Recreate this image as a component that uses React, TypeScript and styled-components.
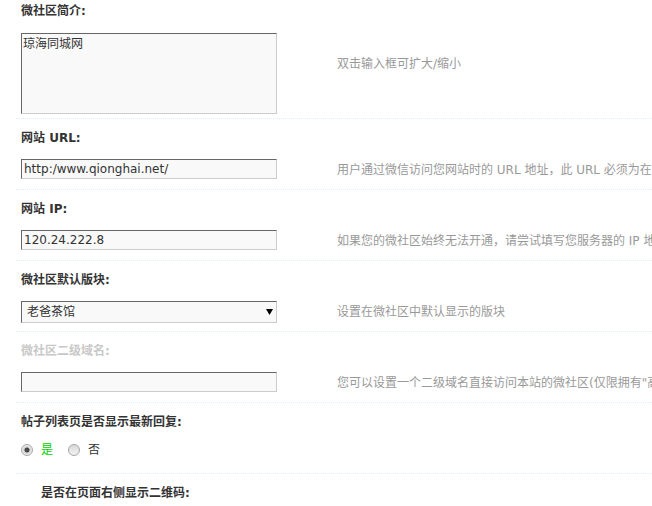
import React from "react";
import styled, { createGlobalStyle, css } from "styled-components";

const GlobalStyle = createGlobalStyle`
  html, body {
    margin: 0;
    padding: 0;
    background: #fff;
    overflow: hidden;
  }
  body {
    font-size: 12px;
    font-family: "DejaVu Sans", "Noto Sans CJK SC", sans-serif;
    color: #333;
  }
`;

const Page = styled.div`
  width: 652px;
  height: 506px;
  overflow: hidden;
`;

const Section = styled.div<{ $first?: boolean }>`
  margin-left: 16px;
  width: 700px;
  border-top: ${(p) => (p.$first ? "none" : "1px dotted #deeffb")};
`;

const LabelRow = styled.div<{ $first?: boolean; $indent?: boolean; $disabled?: boolean }>`
  font-family: "DejaVu Sans", "Noto Sans CJK SC", sans-serif;
  font-weight: 700;
  line-height: 16px;
  white-space: nowrap;
  color: ${(p) => (p.$disabled ? "#c8c8c8" : "#333")};
  padding: ${(p) => (p.$first ? "3px 0 14px" : "11px 0 5px")};
  padding-left: ${(p) => (p.$indent ? "25px" : "5px")};
`;

const FieldRow = styled.div<{ $tall?: boolean }>`
  display: flex;
  align-items: flex-start;
  box-sizing: border-box;
  ${(p) =>
    p.$tall
      ? css`
          height: 85px;
          padding-top: 0;
        `
      : css`
          height: 38px;
          padding-top: 8px;
        `}
`;

const FieldCell = styled.div`
  width: 321px;
  flex: none;
  padding-left: 5px;
  box-sizing: border-box;
`;

const Tip = styled.div<{ $top: number }>`
  color: #999;
  line-height: 16px;
  white-space: nowrap;
  padding-top: ${(p) => p.$top}px;
`;

const fieldBox = css`
  display: block;
  box-sizing: border-box;
  width: 256px;
  margin: 0;
  border: 1px solid #cccccc;
  border-top-color: #666;
  border-left-color: #666;
  background: #f9f9f9;
  color: #333;
  font-size: 12px;
  font-family: "DejaVu Sans", "Noto Sans CJK SC", sans-serif;
  outline: none;
  border-radius: 0;
`;

const TextInput = styled.input`
  ${fieldBox};
  height: 20px;
  padding: 0 2px;
`;

const TextArea = styled.textarea`
  ${fieldBox};
  height: 81px;
  padding: 2px 1px;
  line-height: 16px;
  resize: none;
`;

const SelectWrap = styled.div`
  position: relative;
  width: 256px;
  height: 22px;
`;

const Select = styled.select`
  ${fieldBox};
  height: 22px;
  padding: 0 0 0 5px;
  appearance: none;
  -webkit-appearance: none;
`;

const SelectArrow = styled.svg`
  position: absolute;
  right: 4px;
  top: 8px;
  pointer-events: none;
`;

const RadioGroup = styled.div`
  display: flex;
  align-items: center;
  height: 14px;
  padding-left: 5px;
`;

const RadioLabel = styled.label<{ $on?: boolean }>`
  display: flex;
  align-items: center;
  margin-right: 15px;
  color: ${(p) => (p.$on ? "#00d000" : "#333")};
  line-height: 14px;
`;

const Radio = styled.input`
  appearance: none;
  -webkit-appearance: none;
  width: 12px;
  height: 12px;
  margin: 0 8px 0 0;
  border-radius: 50%;
  border: 1px solid #a6a6a6;
  box-sizing: border-box;
  background: linear-gradient(#d8d8d8, #f4f4f4);
  &:checked {
    background: radial-gradient(circle, #4a4a4a 0 2.2px, #cfcfcf 2.8px, #f0f0f0 5px);
  }
`;

export default function App() {
  return (
    <>
      <GlobalStyle />
      <Page>
        <Section $first>
          <LabelRow $first>微社区简介:</LabelRow>
          <FieldRow $tall>
            <FieldCell>
              <TextArea defaultValue="琼海同城网" />
            </FieldCell>
            <Tip $top={23}>双击输入框可扩大/缩小</Tip>
          </FieldRow>
        </Section>

        <Section>
          <LabelRow>网站 URL:</LabelRow>
          <FieldRow>
            <FieldCell>
              <TextInput defaultValue="http:/www.qionghai.net/" />
            </FieldCell>
            <Tip $top={3}>用户通过微信访问您网站时的 URL 地址，此 URL 必须为在互联网上可以访问的地址</Tip>
          </FieldRow>
        </Section>

        <Section>
          <LabelRow>网站 IP:</LabelRow>
          <FieldRow>
            <FieldCell>
              <TextInput defaultValue="120.24.222.8" />
            </FieldCell>
            <Tip $top={3}>如果您的微社区始终无法开通，请尝试填写您服务器的 IP 地址</Tip>
          </FieldRow>
        </Section>

        <Section>
          <LabelRow>微社区默认版块:</LabelRow>
          <FieldRow>
            <FieldCell>
              <SelectWrap>
                <Select defaultValue="1">
                  <option value="1">老爸茶馆</option>
                </Select>
                <SelectArrow width="7" height="6" viewBox="0 0 7 6">
                  <polygon points="0,0 7,0 3.5,6" fill="#000" />
                </SelectArrow>
              </SelectWrap>
            </FieldCell>
            <Tip $top={3}>设置在微社区中默认显示的版块</Tip>
          </FieldRow>
        </Section>

        <Section>
          <LabelRow $disabled>微社区二级域名:</LabelRow>
          <FieldRow>
            <FieldCell>
              <TextInput defaultValue="" />
            </FieldCell>
            <Tip $top={3}>您可以设置一个二级域名直接访问本站的微社区(仅限拥有"高级版"权限的站点)</Tip>
          </FieldRow>
        </Section>

        <Section>
          <LabelRow>帖子列表页是否显示最新回复:</LabelRow>
          <FieldRow>
            <RadioGroup>
              <RadioLabel $on>
                <Radio type="radio" name="reply" defaultChecked />是
              </RadioLabel>
              <RadioLabel>
                <Radio type="radio" name="reply" />否
              </RadioLabel>
            </RadioGroup>
          </FieldRow>
        </Section>

        <Section>
          <LabelRow $indent>是否在页面右侧显示二维码:</LabelRow>
        </Section>
      </Page>
    </>
  );
}
